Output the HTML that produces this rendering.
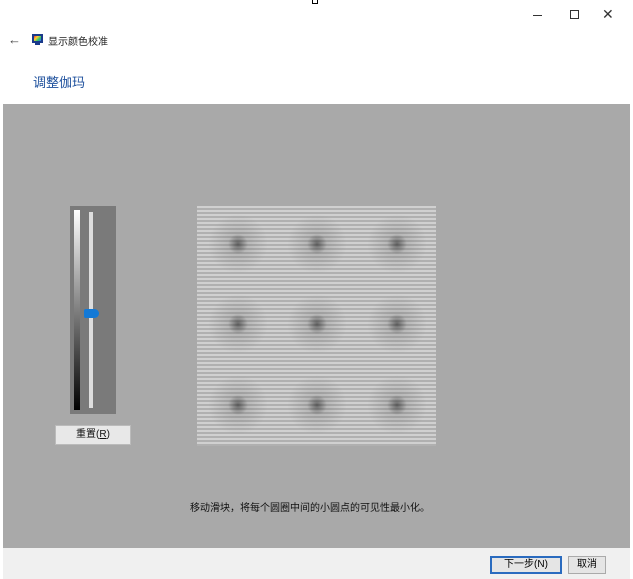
<!DOCTYPE html>
<html><head><meta charset="utf-8"><style>
*{margin:0;padding:0;box-sizing:border-box}
body{width:633px;height:579px;background:#fff;position:relative;overflow:hidden;font-family:"Liberation Sans","Noto Sans CJK SC",sans-serif}
.a{position:absolute}
.gray{left:3px;top:104px;width:627px;height:444px;background:#a9a9a9}
.bottom{left:3px;top:548px;width:627px;height:31px;background:#f0f0f0}
.pat{left:197px;top:206px;width:239px;height:240px;
background:
radial-gradient(circle at 41px 38px,rgba(30,30,30,.6) 0,rgba(90,90,90,.2) 10px,rgba(0,0,0,0) 30px),
radial-gradient(circle at 120px 38px,rgba(30,30,30,.6) 0,rgba(90,90,90,.2) 10px,rgba(0,0,0,0) 30px),
radial-gradient(circle at 200px 38px,rgba(30,30,30,.6) 0,rgba(90,90,90,.2) 10px,rgba(0,0,0,0) 30px),
radial-gradient(circle at 41px 118px,rgba(30,30,30,.6) 0,rgba(90,90,90,.2) 10px,rgba(0,0,0,0) 30px),
radial-gradient(circle at 120px 118px,rgba(30,30,30,.6) 0,rgba(90,90,90,.2) 10px,rgba(0,0,0,0) 30px),
radial-gradient(circle at 200px 118px,rgba(30,30,30,.6) 0,rgba(90,90,90,.2) 10px,rgba(0,0,0,0) 30px),
radial-gradient(circle at 41px 199px,rgba(30,30,30,.6) 0,rgba(90,90,90,.2) 10px,rgba(0,0,0,0) 30px),
radial-gradient(circle at 120px 199px,rgba(30,30,30,.6) 0,rgba(90,90,90,.2) 10px,rgba(0,0,0,0) 30px),
radial-gradient(circle at 200px 199px,rgba(30,30,30,.6) 0,rgba(90,90,90,.2) 10px,rgba(0,0,0,0) 30px),
repeating-linear-gradient(180deg,#d0d0d0 0,#d0d0d0 2px,#b0b0b0 2px,#b0b0b0 4px)}
</style></head><body>
<div class="a" style="left:312px;top:0;width:6px;height:4px;border:1px solid #000;border-top:none"></div>
<div class="a" style="left:533px;top:15px;width:9px;height:1px;background:#333"></div>
<div class="a" style="left:570px;top:10px;width:9px;height:9px;border:1px solid #333"></div>
<div class="a" style="left:602px;top:6px;font-size:14px;color:#333">✕</div>
<div class="a" style="left:8px;top:32px;font-size:13px;color:#444">←</div>
<div class="a" style="left:32px;top:34px;width:11px;height:9px;background:linear-gradient(135deg,#e33,#fc3,#3c6,#36f);border:2px solid #1a3a8a"></div>
<div class="a" style="left:35px;top:43px;width:5px;height:2px;background:#1a3a8a"></div>
<div class="a" style="left:48px;top:33px;font-size:10px;color:#222">显示颜色校准</div>
<div class="a" style="left:33px;top:72px;font-size:13px;color:#1c4f9c">调整伽玛</div>
<div class="a gray"></div>
<div class="a bottom"></div>
<div class="a" style="left:70px;top:206px;width:46px;height:208px;background:#7a7a7a"></div>
<div class="a" style="left:74px;top:210px;width:6px;height:200px;background:linear-gradient(#fff,#000)"></div>
<div class="a" style="left:89px;top:212px;width:4px;height:196px;background:#ddd"></div>
<div class="a" style="left:84px;top:309px;width:15px;height:9px;background:#1379d6;border-radius:2px 5px 5px 2px"></div>
<div class="a" style="left:55px;top:425px;width:76px;height:20px;background:#e8e8e8;border:1px solid #bbb;font-size:10px;text-align:center;line-height:18px;color:#111">重置(<u>R</u>)</div>
<div class="a pat"></div>
<div class="a" style="left:190px;top:499px;font-size:10px;color:#111">移动滑块，将每个圆圈中间的小圆点的可见性最小化。</div>
<div class="a" style="left:490px;top:556px;width:72px;height:18px;border:2px solid #2a6bbf;background:#e5e5e5;font-size:10px;text-align:center;line-height:14px">下一步(N)</div>
<div class="a" style="left:568px;top:556px;width:38px;height:18px;border:1px solid #aaa;background:#e5e5e5;font-size:10px;text-align:center;line-height:16px">取消</div>
</body></html>
